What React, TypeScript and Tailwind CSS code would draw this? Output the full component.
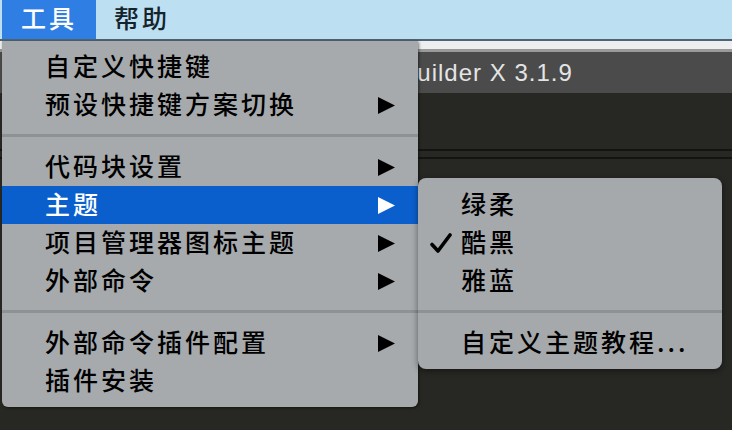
import React from "react";

type Item =
  | { kind: "item"; label: string; arrow?: boolean; active?: boolean; checked?: boolean }
  | { kind: "sep" };

const font = { fontFamily: '"Noto Sans CJK SC", "Noto Sans", sans-serif' };

const toolsMenu: Item[] = [
  { kind: "item", label: "自定义快捷键" },
  { kind: "item", label: "预设快捷键方案切换", arrow: true },
  { kind: "sep" },
  { kind: "item", label: "代码块设置", arrow: true },
  { kind: "item", label: "主题", arrow: true, active: true },
  { kind: "item", label: "项目管理器图标主题", arrow: true },
  { kind: "item", label: "外部命令", arrow: true },
  { kind: "sep" },
  { kind: "item", label: "外部命令插件配置", arrow: true },
  { kind: "item", label: "插件安装" },
];

const themeMenu: Item[] = [
  { kind: "item", label: "绿柔" },
  { kind: "item", label: "酷黑", checked: true },
  { kind: "item", label: "雅蓝" },
  { kind: "sep" },
  { kind: "item", label: "自定义主题教程..." },
];

const Arrow = ({ white }: { white?: boolean }) => (
  <svg width="17" height="17" viewBox="0 0 17 17" className="shrink-0">
    <polygon points="0,0 17,8.5 0,17" fill={white ? "#ffffff" : "#000000"} />
  </svg>
);

const Check = () => (
  <svg width="22" height="22" viewBox="0 0 22 22" className="absolute left-[12px] top-[8px]">
    <path
      d="M2 12.5 L8 19 L20 3"
      fill="none"
      stroke="#000"
      strokeWidth="3.6"
      strokeLinecap="round"
      strokeLinejoin="round"
    />
  </svg>
);

const MenuRows = ({ items, pl, pr }: { items: Item[]; pl: string; pr: string }) => (
  <>
    {items.map((it, i) =>
      it.kind === "sep" ? (
        <div key={i} className="pt-[10px] pb-[11px]">
          <div className="h-[3px] bg-[#8e9294]" />
        </div>
      ) : (
        <div
          key={i}
          className={`relative flex items-center justify-between h-[38px] ${pl} ${pr} ${
            it.active ? "bg-[#0b5fcd] text-white" : "text-black"
          }`}
        >
          {it.checked && <Check />}
          <span className="mb-[4px] text-[25px] font-medium tracking-[3px] leading-none">{it.label}</span>
          {it.arrow && <Arrow white={it.active} />}
        </div>
      )
    )}
  </>
);

export default function App() {
  return (
    <div className="relative w-[732px] h-[430px] overflow-hidden bg-[#272723]" style={font}>
      {/* menu bar */}
      <div className="flex h-[39px] bg-[#bcdff2]">
        <div className="ml-[2px] w-[94px] flex items-center justify-center pb-[3px] bg-[#2f7ee4] text-white text-[25px] font-medium tracking-[3px]">
          工具
        </div>
        <div className="ml-[18px] flex items-center pb-[3px] text-[#15232b] text-[25px] font-medium tracking-[3px]">
          帮助
        </div>
      </div>
      <div className="h-[2px] bg-[#4f6373]" />
      {/* window chrome behind */}
      <div className="h-[8px] bg-[#eceef0]" />
      <div className="h-[3px] bg-[#9a9a9a]" />
      <div className="h-[41px] bg-[#4b4b4b] flex items-center pl-[382px]">
        <span
          className="text-[24px] tracking-[1px] text-[#e4e4e4]"
          style={{ fontFamily: '"Liberation Sans", Arial, sans-serif' }}
        >
          HBuilder X 3.1.9
        </span>
      </div>
      <div className="h-[56px]" />
      <div className="h-[2px] bg-[#141412]" />
      <div className="h-[6px]" />
      <div className="h-[2px] bg-[#141412]" />

      {/* tools menu */}
      <div className="absolute left-[2px] top-[41px] w-[416px] h-[366px] pt-[7px] bg-[#a6aaac] rounded-b-[6px] shadow-[1px_1px_3px_rgba(0,0,0,0.5)]">
        <MenuRows items={toolsMenu} pl="pl-[43px]" pr="pr-[23px]" />
      </div>

      {/* theme submenu */}
      <div className="absolute left-[418px] top-[178px] w-[304px] h-[191px] pt-[8px] bg-[#a5a9ab] rounded-[8px] shadow-[0_2px_6px_rgba(0,0,0,0.45)]">
        <MenuRows items={themeMenu} pl="pl-[43px]" pr="pr-[20px]" />
      </div>
    </div>
  );
}
